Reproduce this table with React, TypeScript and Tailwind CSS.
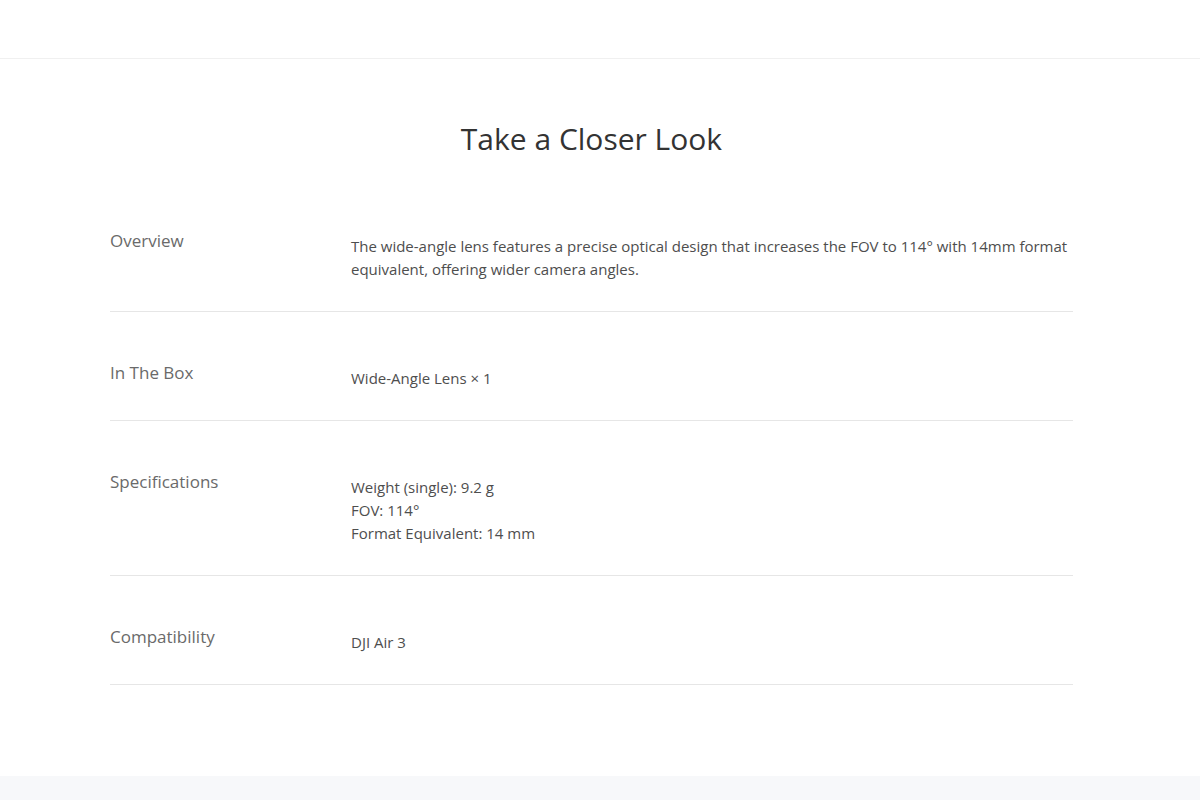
const rows: { label: string; lines: string[] }[] = [
  {
    label: "Overview",
    lines: [
      "The wide-angle lens features a precise optical design that increases the FOV to 114° with 14mm format equivalent, offering wider camera angles.",
    ],
  },
  { label: "In The Box", lines: ["Wide-Angle Lens × 1"] },
  {
    label: "Specifications",
    lines: ["Weight (single): 9.2 g", "FOV: 114°", "Format Equivalent: 14 mm"],
  },
  { label: "Compatibility", lines: ["DJI Air 3"] },
];

export default function App() {
  return (
    <div className="min-h-[800px] bg-white font-['Open_Sans',sans-serif]">
      {/* top bar */}
      <div className="h-[59px] border-b border-[#f0f0f0]" />

      <section className="w-[1183px] pb-[91px] pt-[60px]">
        <h2 className="text-center text-[30px] leading-[40px] text-[#333]">Take a Closer Look</h2>

        <div className="mx-auto mt-[70px] w-[963px]">
          {rows.map((row) => (
            <div
              key={row.label}
              className="flex border-b border-[#e6e6e6] pb-[30px] pt-[49px] first:pt-0"
            >
              <div className="w-[241px] shrink-0 text-[17px] leading-[24px] text-[#6a6a6a]">
                {row.label}
              </div>
              <div className="mt-[6px] flex-1 text-[15px] leading-[23px] text-[#4e4e4e]">
                {row.lines.map((line) => (
                  <p key={line}>{line}</p>
                ))}
              </div>
            </div>
          ))}
        </div>
      </section>

      <div className="h-[40px] bg-[#f7f8fa]" />
    </div>
  );
}
